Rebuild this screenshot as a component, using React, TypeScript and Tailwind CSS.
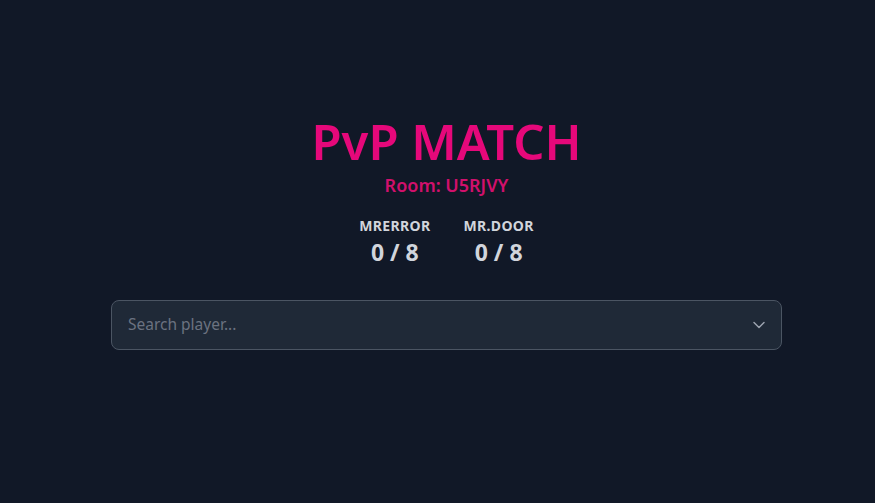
import React from "react";

export default function App() {
  return (
    <div className="min-h-screen w-full bg-[#111827] text-gray-200 pl-[18px]" style={{ fontFamily: '"Noto Sans", "Open Sans", sans-serif' }}>
      <div className="mx-auto w-[671px] pt-[111px] flex flex-col items-center">
        <h1 className="text-[49px] leading-[60px] font-semibold text-[#e6087a]">PvP MATCH</h1>
        <div className="mt-[2px] text-[18px] leading-6 font-semibold text-[#d1106c]">Room: U5RJVY</div>
        <div className="mt-[21px] flex gap-[33px]">
          <div className="flex flex-col items-center">
            <div className="text-[14px] leading-4 font-bold tracking-wide text-gray-300">MRERROR</div>
            <div className="mt-[4px] text-[23px] leading-7 font-bold text-gray-300">0 / 8</div>
          </div>
          <div className="flex flex-col items-center">
            <div className="text-[14px] leading-4 font-bold tracking-wide text-gray-300">MR.DOOR</div>
            <div className="mt-[4px] text-[23px] leading-7 font-bold text-gray-300">0 / 8</div>
          </div>
        </div>
        <div className="mt-[34px] w-full h-[50px] rounded-lg border border-[#4b5563] bg-[#1f2937] flex items-center justify-between pl-4 pr-[12px]">
          <span className="text-[15.5px] text-[#6b7280]">Search player...</span>
          <svg width="20" height="20" viewBox="0 0 24 24" fill="none" stroke="#9ca3af" strokeWidth="1.75" strokeLinecap="round" strokeLinejoin="round">
            <path d="M6 9l6 6 6-6" />
          </svg>
        </div>
      </div>
    </div>
  );
}
